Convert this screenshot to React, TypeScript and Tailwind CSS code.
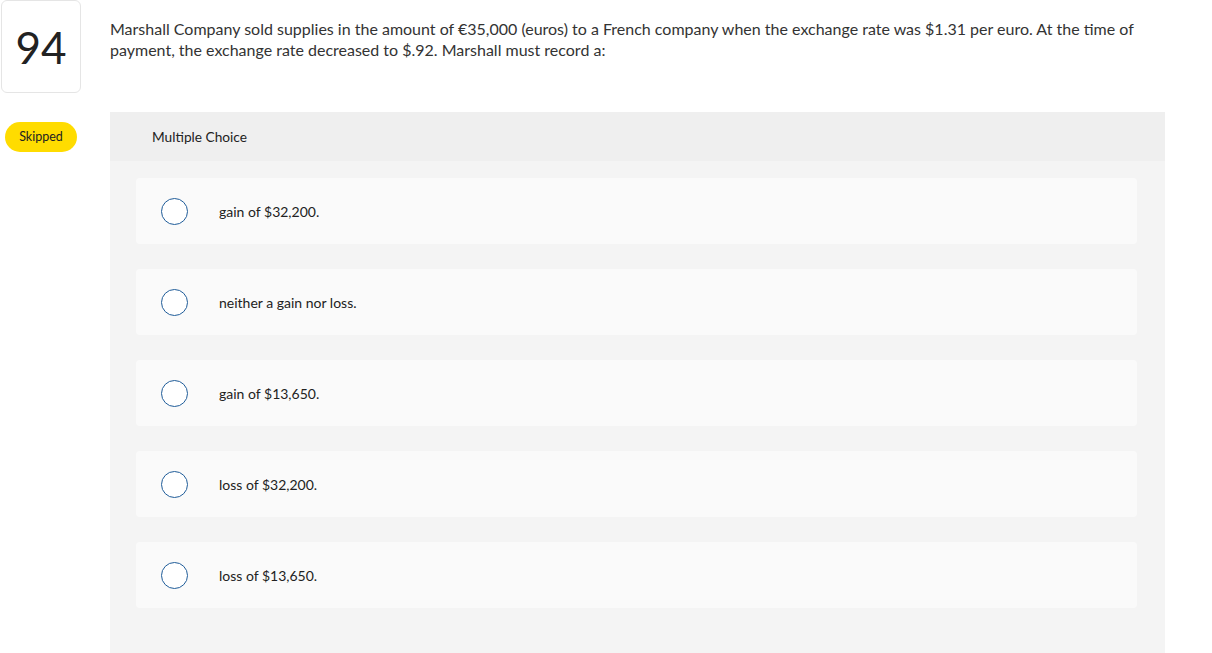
const options = [
  'gain of $32,200.',
  'neither a gain nor loss.',
  'gain of $13,650.',
  'loss of $32,200.',
  'loss of $13,650.',
];

export default function App() {
  return (
    <div className="min-h-[653px] bg-white text-[#333] font-['Lato','Liberation_Sans',sans-serif] flex">
      <div className="w-[110px] shrink-0 flex flex-col">
        <div className="ml-[1px] w-[80px] h-[93px] border border-[#e5e5e5] rounded-md flex items-center justify-center text-[44px] text-[#222] leading-none">
          94
        </div>
        <div className="mt-[29px] ml-[5px] w-[72px] h-[30px] rounded-full bg-[#ffdc00] flex items-center justify-center text-[12.5px] text-[#222]">
          Skipped
        </div>
      </div>
      <div className="w-[1055px] flex flex-col">
        <p className="pt-[18px] text-[16px] leading-[21px] text-[#333] pr-[22px]">
          Marshall Company sold supplies in the amount of €35,000 (euros) to a French company when the exchange rate was $1.31 per euro. At the time of payment, the exchange rate decreased to $.92. Marshall must record a:
        </p>
        <div className="mt-[52px] flex flex-col bg-[#f4f4f4]">
          <div className="h-[49px] bg-[#efefef] flex items-center pl-[42px] pt-[1px] text-[13.7px] text-[#222]">
            Multiple Choice
          </div>
          <div className="flex flex-col gap-[25px] pl-[26px] pr-[28px] pt-[17px] pb-[45px]">
            {options.map((o) => (
              <div key={o} className="h-[66px] bg-[#fafafa] rounded-sm flex items-center pl-[25px]">
                <span className="w-[27px] h-[27px] rounded-full border-[1.5px] border-[#1f5c99] bg-white shrink-0" />
                <span className="ml-[31px] pt-[1px] text-[14px] text-[#222]">{o}</span>
              </div>
            ))}
          </div>
        </div>
      </div>
    </div>
  );
}
